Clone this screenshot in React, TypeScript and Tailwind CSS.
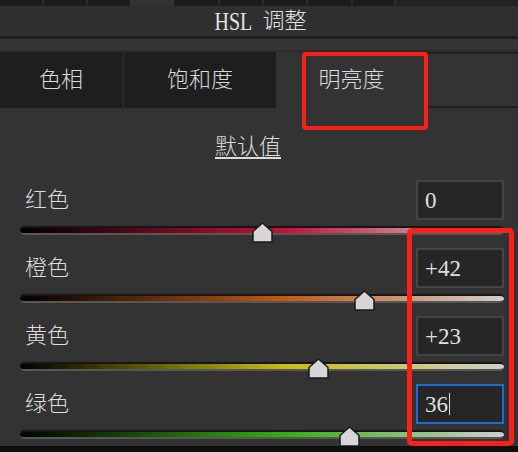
import React from "react"

const font = { fontFamily: "'Liberation Serif', 'Noto Sans CJK SC', serif" }

// top strip segments: [width, colour]
const strip: [number, string][] = [
    [42, "bg-[#1c1c1c]"], [2, "bg-[#2b2b2b]"], [42, "bg-[#1c1c1c]"], [2, "bg-[#2b2b2b]"], [42, "bg-[#1c1c1c]"],
    [44, "bg-[#333333]"],
    [44, "bg-[#1c1c1c]"], [2, "bg-[#2b2b2b]"], [42, "bg-[#1c1c1c]"], [2, "bg-[#2b2b2b]"], [42, "bg-[#1c1c1c]"],
    [2, "bg-[#2b2b2b]"], [43, "bg-[#1c1c1c]"], [2, "bg-[#2b2b2b]"], [41, "bg-[#1c1c1c]"], [2, "bg-[#2b2b2b]"],
    [122, "bg-[#212121]"],
]

const rows = [
    { label: "红色", value: "0", v: 0, color: "#c8103a", focus: false },
    { label: "橙色", value: "+42", v: 42, color: "#c45a12", focus: false },
    { label: "黄色", value: "+23", v: 23, color: "#c8be10", focus: false },
    { label: "绿色", value: "36", v: 36, color: "#34b010", focus: true },
]

function Thumb() {
    return (
        <svg width="21" height="21" viewBox="0 0 21 21">
            <polygon points="10.5,1 20,9.5 20,20 1,20 1,9.5" fill="#d6d6d6" stroke="#1a1a1a" strokeWidth="1.5" strokeLinejoin="round" />
        </svg>
    )
}

function SliderRow({ label, value, v, color, focus }: typeof rows[number]) {
    const pos = 50 + v / 2
    return (
        <div className="h-[68px] shrink-0">
            <div className="flex h-[40px] items-center pl-[25px] pr-[14px]">
                <span className="text-[22px] font-light leading-none text-[#dcdcdc]">{label}</span>
                <div
                    className={`ml-auto flex h-[40px] w-[88px] items-center border-2 bg-[#262626] px-[7px] ${focus ? "border-[#1e6ad6]" : "border-[#454545]"}`}
                >
                    <span className="text-[23px] leading-none text-[#e0e0e0]">{value}</span>
                    {focus && <span className="ml-px h-[22px] w-px bg-[#dddddd]" />}
                </div>
            </div>
            <div className="relative ml-[20px] mt-[6px] w-[484px]">
                <div className="h-[9px] overflow-hidden rounded-full border-t-2 border-b-2 border-t-[#151515] border-b-[#575757] bg-[#151515]">
                    <div
                        className="h-full w-full"
                        style={{ background: `linear-gradient(to right, #000000, ${color} 55%, #cfcfcf)` }}
                    />
                </div>
                <div className="absolute top-[-4px]" style={{ left: `calc(${pos}% - 10px)` }}>
                    <Thumb />
                </div>
            </div>
        </div>
    )
}

export default function App() {
    return (
        <div className="relative flex h-[452px] w-[518px] flex-col overflow-hidden bg-[#0e0e0e]" style={font}>
            <div className="flex h-[6px] shrink-0">
                {strip.map(([w, c], i) => (
                    <div key={i} className={`h-full shrink-0 ${c}`} style={{ width: w }} />
                ))}
            </div>
            <div className="flex h-[30px] shrink-0 items-center justify-center bg-[#2f2f2f] pr-[6px] text-[22px] font-light leading-none text-[#e2e2e2]">
                <span className="inline-block origin-right scale-x-[0.8] text-[25px] font-normal">HSL</span>
                <span className="ml-[10px]">调整</span>
            </div>
            <div className="h-[3px] shrink-0 bg-[#1e1e1e]" />
            <div className="h-[11px] shrink-0 bg-[#353535]" />
            <div className="h-[2px] shrink-0 bg-[#2b2b2b]" />

            <div className="flex h-[56px] shrink-0 bg-[#333333] text-[22px] font-light leading-none text-[#dadada]">
                <div className="flex w-[122px] items-center justify-center bg-[#1e1e1e]">色相</div>
                <div className="w-[2px] bg-[#282828]" />
                <div className="flex w-[152px] items-center justify-center bg-[#1e1e1e]">饱和度</div>
                <div className="flex w-[151px] items-center justify-center">明亮度</div>
                <div className="flex-1 border-y-2 border-[#1f1f1f]" />
            </div>

            <div className="flex flex-1 flex-col overflow-hidden bg-[#333333]">
                <div className="flex h-[72px] shrink-0 justify-center pr-[22px] pt-[28px]">
                    <span className="text-[22px] font-light leading-none text-[#dcdcdc] underline underline-offset-[3px]">默认值</span>
                </div>
                {rows.map((r) => (
                    <SliderRow key={r.label} {...r} />
                ))}
            </div>
            <div className="h-[6px] shrink-0 bg-[#0e0e0e]" />

            {/* red annotation boxes */}
            <div className="absolute left-[302px] top-[52px] h-[78px] w-[126px] rounded-[4px] border-4 border-[#f9221a]" />
            <div className="absolute left-[407px] top-[228px] h-[218px] w-[107px] rounded-[5px] border-[5px] border-[#f9221a]" />
        </div>
    )
}
